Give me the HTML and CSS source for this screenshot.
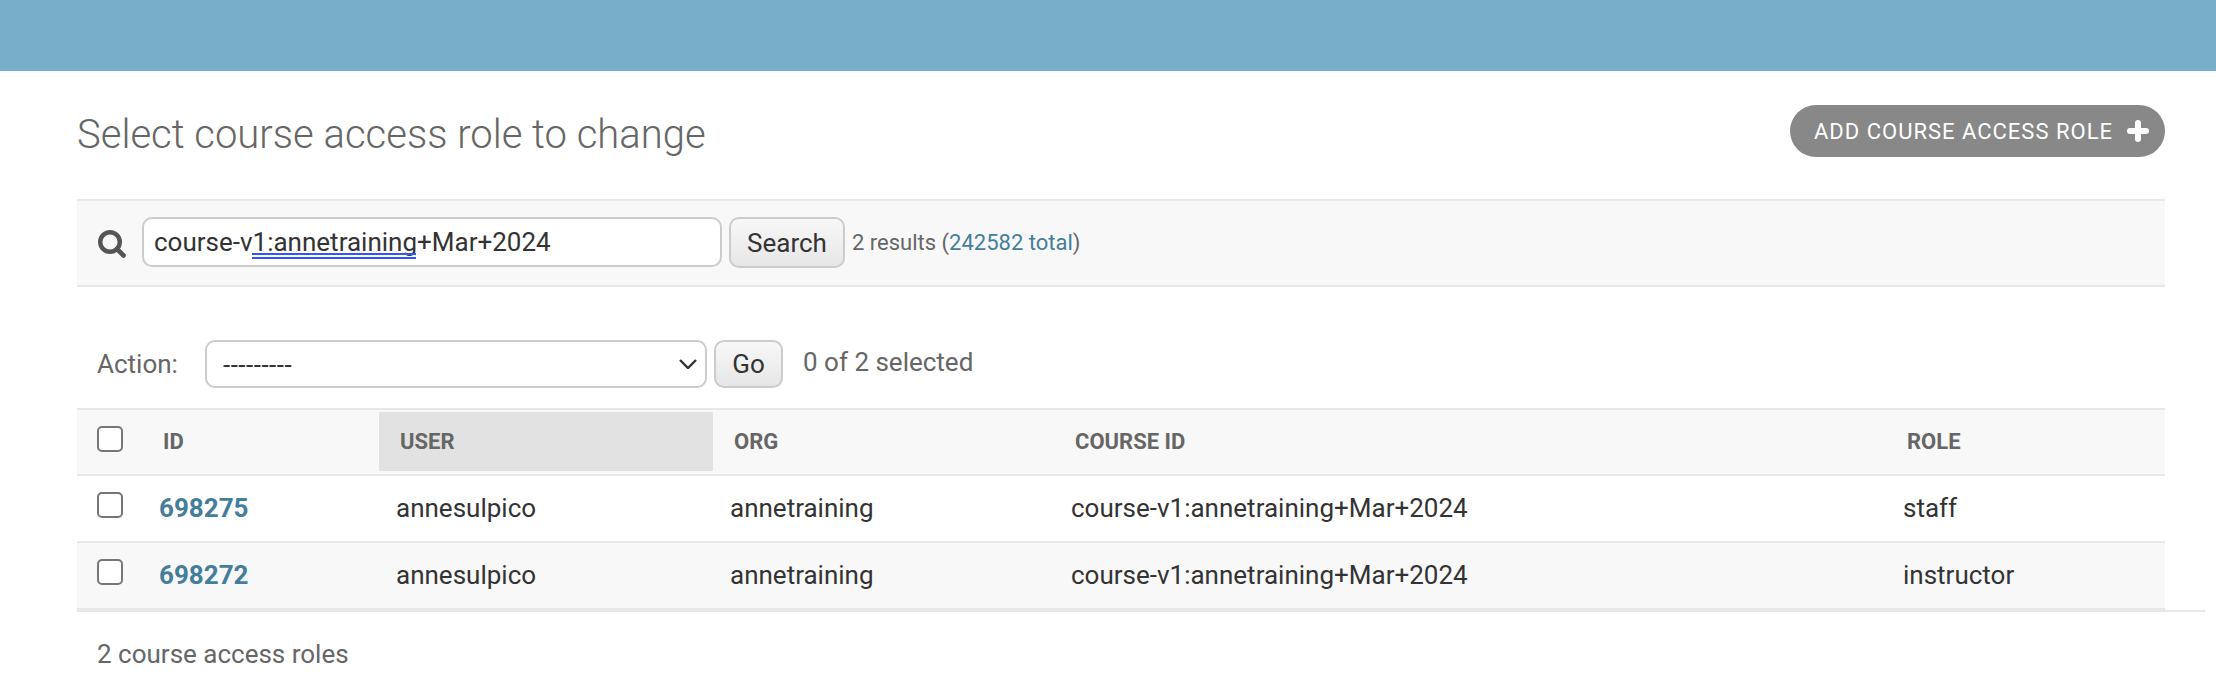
FILE: index.html
```html
<!DOCTYPE html>
<html lang="en">
<head>
<meta charset="utf-8">
<title>Select course access role to change</title>
<link rel="stylesheet" href="styles.css">
</head>
<body>
<header class="topbar"></header>
<main class="content">
  <div class="title-row">
    <h1 class="title">Select course access role to change</h1>
    <a class="add-btn" href="#">ADD COURSE ACCESS ROLE
      <svg class="add-icon" viewBox="0 0 22 22" width="22" height="22" aria-hidden="true"><path d="M11 3v16M3 11h16" stroke="#fff" stroke-width="6" stroke-linecap="round" fill="none"/></svg>
    </a>
  </div>
  <form class="search-bar">
    <svg class="search-icon" viewBox="0 0 28 28" width="28" height="28" aria-hidden="true"><circle cx="12" cy="12" r="9.8" fill="none" stroke="#555" stroke-width="4.4"/><path d="M19 19l6.5 6.5" stroke="#555" stroke-width="4.6" stroke-linecap="round"/></svg>
    <div class="search-field">
      <input class="search-input" type="text" value="course-v1:annetraining+Mar+2024">
      <span class="spell-mark"></span>
    </div>
    <button class="btn search-btn" type="button">Search</button>
    <span class="result-count">2 results (<a href="#">242582 total</a>)</span>
  </form>
  <div class="actions">
    <label class="action-label">Action:</label>
    <div class="select-wrap">
      <select class="action-select"><option>---------</option></select>
      <svg class="chevron" viewBox="0 0 18 10" width="18" height="10" aria-hidden="true"><path d="M1 1l8 8 8-8" fill="none" stroke="#333" stroke-width="2.4"/></svg>
    </div>
    <button class="btn go-btn" type="button">Go</button>
    <span class="selected-count">0 of 2 selected</span>
  </div>
  <div class="results">
    <table class="table">
      <colgroup><col class="c-check"><col class="c-id"><col class="c-user"><col class="c-org"><col class="c-course"><col></colgroup>
      <thead>
        <tr>
          <th><div class="th-in th-check"><input class="check" type="checkbox"></div></th>
          <th><div class="th-in">ID</div></th>
          <th><div class="th-in th-sorted">USER</div></th>
          <th><div class="th-in">ORG</div></th>
          <th><div class="th-in">COURSE ID</div></th>
          <th><div class="th-in">ROLE</div></th>
        </tr>
      </thead>
      <tbody>
        <tr>
          <td class="td-check"><input class="check" type="checkbox"></td>
          <td class="td-id"><a href="#">698275</a></td>
          <td>annesulpico</td>
          <td>annetraining</td>
          <td>course-v1:annetraining+Mar+2024</td>
          <td>staff</td>
        </tr>
        <tr class="alt">
          <td class="td-check"><input class="check" type="checkbox"></td>
          <td class="td-id"><a href="#">698272</a></td>
          <td>annesulpico</td>
          <td>annetraining</td>
          <td>course-v1:annetraining+Mar+2024</td>
          <td>instructor</td>
        </tr>
      </tbody>
    </table>
  </div>
  <p class="paginator">2 course access roles</p>
</main>
</body>
</html>
```
FILE: styles.css
```css
* { box-sizing: border-box; }
html, body { margin: 0; padding: 0; }
body {
  font-family: Roboto, "Liberation Sans", sans-serif;
  font-size: 26px;
  color: #333;
  background: #fff;
  overflow: hidden;
}
a { color: #447e9b; text-decoration: none; }

.topbar { height: 71px; background: #79aec8; }

.content { padding: 34px 51px 0 77px; }

.title-row {
  display: flex;
  justify-content: space-between;
  align-items: center;
  height: 52px;
}
.title {
  margin: 8px 0 0;
  font-size: 40px;
  font-weight: 300;
  color: #666;
  line-height: 60px;
}
.add-btn {
  display: flex;
  align-items: center;
  gap: 14px;
  height: 52px;
  padding: 0 16px 0 24px;
  border-radius: 26px;
  background: #888;
  color: #fff;
  font-size: 22px;
  letter-spacing: 1px;
}
.add-icon { display: block; }

.search-bar {
  display: flex;
  align-items: flex-start;
  height: 88px;
  margin-top: 42px;
  padding: 16px 0 0 21px;
  background: #f8f8f8;
  border-top: 2px solid #e8e8e8;
  border-bottom: 2px solid #e8e8e8;
}
.search-icon { display: block; flex: none; margin: 13px 16px 0 0; }
.search-field { position: relative; width: 580px; height: 50px; flex: none; }
.search-input {
  display: block;
  width: 100%;
  height: 100%;
  padding: 0 10px;
  border: 2px solid #ccc;
  border-radius: 10px;
  background: #fff;
  color: #333;
  font: 26px Roboto, sans-serif;
}
.spell-mark {
  position: absolute;
  left: 110px;
  top: 36px;
  width: 164px;
  height: 6px;
  border-top: 2px solid #3355ff;
  border-bottom: 2px solid #3355ff;
}
.btn {
  flex: none;
  border: 2px solid #ccc;
  border-radius: 10px;
  background: linear-gradient(#f8f8f8, #e6e6e6);
  color: #333;
  font: 26px Roboto, sans-serif;
  padding: 0;
}
.search-btn { width: 116px; height: 51px; margin-left: 7px; }
.result-count { margin-left: 7px; font-size: 22px; line-height: 52px; color: #666; }

.actions {
  display: flex;
  align-items: center;
  height: 48px;
  margin-top: 53px;
  color: #666;
}
.action-label { margin-left: 20px; width: 108px; font-size: 26px; }
.select-wrap { position: relative; width: 502px; height: 48px; flex: none; }
.action-select {
  display: block;
  width: 100%;
  height: 100%;
  padding: 2px 16px 0;
  appearance: none;
  border: 2px solid #ccc;
  border-radius: 10px;
  background: #fff;
  color: #333;
  font: 26px Roboto, sans-serif;
  letter-spacing: 0.5px;
}
.chevron { position: absolute; right: 10px; top: 19px; }
.go-btn { width: 69px; height: 48px; margin-left: 7px; }
.selected-count { margin-left: 20px; margin-top: -4px; font-size: 26px; color: #666; }

.results {
  width: 2128px;
  margin-top: 20px;
  border-bottom: 2px solid #e8e8e8;
}
.table {
  width: 2088px;
  table-layout: fixed;
  border-collapse: separate;
  border-spacing: 0;
}
.c-check { width: 65px; }
.c-id { width: 237px; }
.c-user { width: 334px; }
.c-org { width: 341px; }
.c-course { width: 832px; }

th {
  padding: 2px 0 3px;
  background: #f8f8f8;
  border-top: 2px solid #e8e8e8;
  border-bottom: 2px solid #e8e8e8;
  text-align: left;
  font-size: 22px;
  font-weight: 700;
  color: #666;
}
.th-in {
  display: flex;
  align-items: center;
  height: 59px;
  padding-left: 21px;
}
.th-check { padding-left: 20px; }
.th-sorted { background: #e2e2e2; padding-left: 21px; }

td {
  height: 67px;
  padding: 0 0 2px 17px;
  border-bottom: 2px solid #e8e8e8;
  font-size: 26px;
  color: #333;
  vertical-align: middle;
}
.alt td { background: #f8f8f8; }
.td-check { padding-left: 20px; }
.td-id { font-weight: 700; }
.check {
  appearance: none;
  display: block;
  width: 26px;
  height: 26px;
  margin: -5px 0 0;
  border: 2px solid #767676;
  border-radius: 5px;
  background: #fff;
}

.paginator {
  margin: 26px 0 0 20px;
  font-size: 26px;
  line-height: 32px;
  color: #666;
}
```
